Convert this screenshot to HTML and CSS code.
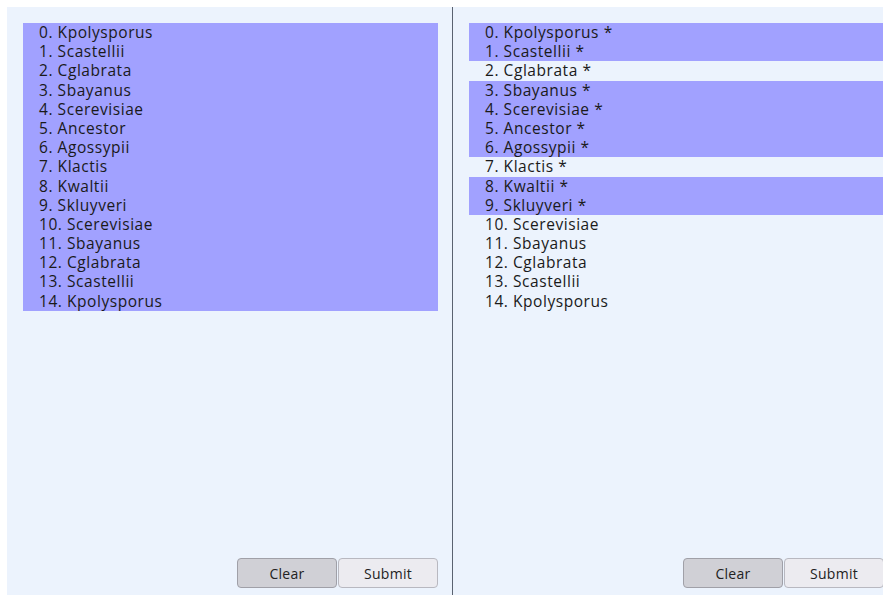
FILE: index.html
```html
<!DOCTYPE html>
<html lang="en">
<head>
<meta charset="utf-8">
<title>Species order</title>
<link rel="stylesheet" href="styles.css">
</head>
<body>
<div class="split">
  <section class="panel">
    <ul class="list">
      <li class="row sel">0. Kpolysporus</li>
      <li class="row sel">1. Scastellii</li>
      <li class="row sel">2. Cglabrata</li>
      <li class="row sel">3. Sbayanus</li>
      <li class="row sel">4. Scerevisiae</li>
      <li class="row sel">5. Ancestor</li>
      <li class="row sel">6. Agossypii</li>
      <li class="row sel">7. Klactis</li>
      <li class="row sel">8. Kwaltii</li>
      <li class="row sel">9. Skluyveri</li>
      <li class="row sel">10. Scerevisiae</li>
      <li class="row sel">11. Sbayanus</li>
      <li class="row sel">12. Cglabrata</li>
      <li class="row sel">13. Scastellii</li>
      <li class="row sel">14. Kpolysporus</li>
    </ul>
    <div class="actions">
      <button class="btn btn-clear" type="button">Clear</button>
      <button class="btn btn-submit" type="button">Submit</button>
    </div>
  </section>
  <div class="divider"></div>
  <section class="panel">
    <ul class="list">
      <li class="row sel">0. Kpolysporus *</li>
      <li class="row sel">1. Scastellii *</li>
      <li class="row">2. Cglabrata *</li>
      <li class="row sel">3. Sbayanus *</li>
      <li class="row sel">4. Scerevisiae *</li>
      <li class="row sel">5. Ancestor *</li>
      <li class="row sel">6. Agossypii *</li>
      <li class="row">7. Klactis *</li>
      <li class="row sel">8. Kwaltii *</li>
      <li class="row sel">9. Skluyveri *</li>
      <li class="row">10. Scerevisiae</li>
      <li class="row">11. Sbayanus</li>
      <li class="row">12. Cglabrata</li>
      <li class="row">13. Scastellii</li>
      <li class="row">14. Kpolysporus</li>
    </ul>
    <div class="actions">
      <button class="btn btn-clear" type="button">Clear</button>
      <button class="btn btn-submit" type="button">Submit</button>
    </div>
  </section>
</div>
</body>
</html>
```

FILE: styles.css
```css
html, body {
  margin: 0;
  height: 100%;
  overflow: hidden;
  background: #ffffff;
}

body {
  padding: 7px 0 0 7px;
  box-sizing: border-box;
  font-family: "Open Sans", "Noto Sans", sans-serif;
  color: #1a1a1a;
}

.split {
  display: flex;
  width: 876px;
  height: 588px;
  overflow: hidden;
}

.panel {
  width: 445px;
  flex: none;
  background: #ecf3fd;
  box-sizing: border-box;
  padding: 16px 14px 7px 16px;
  display: flex;
  flex-direction: column;
}

.divider {
  width: 1px;
  flex: none;
  background: #5a6270;
}

.list {
  list-style: none;
  margin: 0;
  padding: 0;
}

.row {
  height: 19.2px;
  line-height: 19.2px;
  font-size: 15.5px;
  letter-spacing: 0.55px;
  padding-left: 16px;
  white-space: nowrap;
}

.row.sel {
  background: #a1a1ff;
}

.actions {
  margin-top: auto;
  display: flex;
  justify-content: flex-end;
}

.btn {
  width: 100px;
  height: 30px;
  box-sizing: border-box;
  border: 1px solid #b8b8c0;
  border-radius: 4px;
  font-family: inherit;
  font-size: 14px;
  letter-spacing: 0.3px;
  color: #222;
  padding: 0;
}

.btn-clear {
  background: #d0d0d6;
  border-color: #a0a0a8;
}

.btn-submit {
  background: #ecebf0;
  margin-left: 1px;
}
```
